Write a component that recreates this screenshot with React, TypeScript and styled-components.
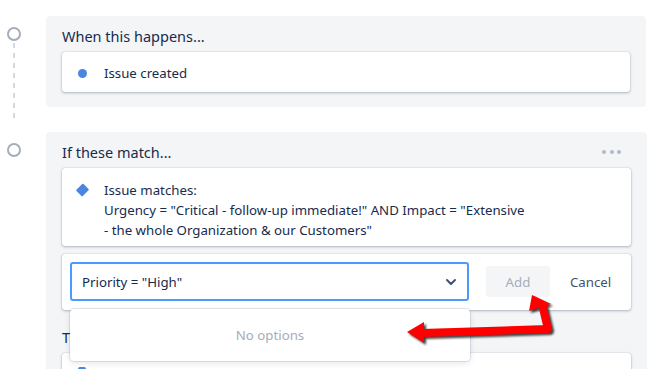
import React from "react";
import styled, { createGlobalStyle } from "styled-components";

const Global = createGlobalStyle`
  html, body { margin: 0; padding: 0; background: #ffffff; overflow: hidden; }
  body { font-family: "Noto Sans", "Liberation Sans", Arial, sans-serif; color: #172b4d; }
  * { box-sizing: border-box; }
`;

const Page = styled.div`
  position: relative;
  width: 654px;
  height: 369px;
  padding-top: 16px;
  overflow: hidden;
`;

const Step = styled.div<{ $last?: boolean }>`
  display: flex;
  width: 646px;
  padding-bottom: ${(p) => (p.$last ? "0" : "25px")};
`;

const Rail = styled.div`
  width: 46px;
  flex: 0 0 46px;
  display: flex;
  flex-direction: column;
  align-items: flex-start;
  padding: 11px 0 0 7px;
`;

const Circle = styled.div`
  width: 14px;
  height: 14px;
  border: 2px solid #a5adba;
  border-radius: 50%;
  background: #fff;
`;

const Connector = styled.div`
  flex: 1;
  width: 2px;
  margin: 2px 0 -12px 6px;
  background: repeating-linear-gradient(
    to bottom,
    #d3d9df 0 5px,
    transparent 5px 10px
  );
`;

const Panel = styled.section<{ $open?: boolean }>`
  flex: 0 0 600px;
  background: #f4f5f7;
  border-radius: 4px;
  padding: 10px 16px ${(p) => (p.$open ? "0" : "15px")};
  display: flex;
  flex-direction: column;
`;

const Header = styled.div`
  display: flex;
  align-items: center;
  justify-content: space-between;
  height: 20px;
  margin-bottom: 6px;
`;

const Title = styled.h2<{ $gapTop?: number }>`
  margin: ${(p) => (p.$gapTop ? `${p.$gapTop}px` : "0")} 0 6px;
  font-size: 14.5px;
  line-height: 20px;
  font-weight: 400;
  color: #172b4d;
`;

const HeaderTitle = styled(Title)`
  margin: 0;
`;

const More = styled.div`
  display: flex;
  gap: 3.5px;
  margin-right: 10px;
  span {
    width: 4px;
    height: 4px;
    border-radius: 50%;
    background: #b3bac5;
  }
`;

const Card = styled.div<{ $pad?: string }>`
  background: #ffffff;
  border-radius: 3px;
  box-shadow: 0 1px 3px rgba(9, 30, 66, 0.28), 0 0 1px rgba(9, 30, 66, 0.31);
  padding: ${(p) => p.$pad || "11px 16px 9px"};
  display: flex;
  align-items: flex-start;
  gap: 17px;
  font-size: 13.25px;
  line-height: 20px;
`;

const IconBox = styled.div`
  width: 9px;
  height: 20px;
  flex: 0 0 9px;
  display: flex;
  align-items: center;
  justify-content: center;
`;

const Dot = styled.span`
  width: 9px;
  height: 9px;
  border-radius: 50%;
  background: #4a86e0;
`;

const Diamond = styled.span`
  width: 10px;
  height: 10px;
  background: #4a86e0;
  transform: rotate(45deg);
  border-radius: 1px;
`;

const ActionIcon = styled.span`
  display: block;
  width: 8px;
  height: 8px;
  border-radius: 2px;
  background: #4a86e0;
`;

const Lines = styled.div`
  display: flex;
  flex-direction: column;
  span { display: block; white-space: nowrap; }
`;

const EditRow = styled.div`
  margin-top: 8px;
  background: #ffffff;
  border-radius: 3px;
  box-shadow: 0 1px 3px rgba(9, 30, 66, 0.28), 0 0 1px rgba(9, 30, 66, 0.31);
  padding: 8px 8px 9px;
  display: flex;
  align-items: center;
`;

const SelectWrap = styled.div`
  position: relative;
  flex: 0 0 399px;
`;

const SelectBox = styled.div`
  height: 39px;
  border: 2px solid #4c9aff;
  border-radius: 3px;
  background: #fff;
  display: flex;
  align-items: center;
  justify-content: space-between;
  padding: 0 9px 0 10px;
  font-size: 13.25px;
  color: #172b4d;
`;

const Menu = styled.div`
  position: absolute;
  left: 0;
  top: calc(100% + 8px);
  width: 400px;
  height: 52px;
  background: #fff;
  border-radius: 4px;
  box-shadow: 0 0 0 1px rgba(9, 30, 66, 0.1), 0 2px 6px rgba(9, 30, 66, 0.12);
  display: flex;
  align-items: center;
  justify-content: center;
  font-size: 13.25px;
  color: #a5adba;
  z-index: 2;
`;

const Button = styled.button<{ $disabled?: boolean }>`
  font-family: inherit;
  font-size: 13.25px;
  height: 31px;
  border: none;
  border-radius: 3px;
  padding: 0 12px;
  background: ${(p) => (p.$disabled ? "#f4f5f7" : "transparent")};
  color: ${(p) => (p.$disabled ? "#a5adba" : "#42526e")};
  cursor: pointer;
`;

const AddButton = styled(Button)`
  width: 64px;
  margin-left: 17px;
`;

const CancelButton = styled(Button)`
  margin-left: 8px;
`;

const Arrow = styled.svg`
  position: absolute;
  left: 400px;
  top: 288px;
  width: 160px;
  height: 60px;
  overflow: visible;
  filter: drop-shadow(2px 2px 1px rgba(0, 0, 0, 0.75));
  z-index: 3;
`;

export default function App() {
  return (
    <>
      <Global />
      <Page>
        <Step>
          <Rail>
            <Circle />
            <Connector />
          </Rail>
          <Panel>
            <Title>When this happens...</Title>
            <Card>
              <IconBox>
                <Dot />
              </IconBox>
              <span>Issue created</span>
            </Card>
          </Panel>
        </Step>

        <Step $last>
          <Rail>
            <Circle />
          </Rail>
          <Panel $open>
            <Header>
              <HeaderTitle>If these match...</HeaderTitle>
              <More>
                <span />
                <span />
                <span />
              </More>
            </Header>
            <Card $pad="12px 16px 6px">
              <IconBox>
                <Diamond />
              </IconBox>
              <Lines>
                <span>Issue matches:</span>
                <span>Urgency = "Critical - follow-up immediate!" AND Impact = "Extensive</span>
                <span>- the whole Organization &amp; our Customers"</span>
              </Lines>
            </Card>
            <EditRow>
              <SelectWrap>
                <SelectBox>
                  <span>Priority = "High"</span>
                  <svg width="14" height="14" viewBox="0 0 14 14">
                    <path d="M3 5l4 4 4-4" fill="none" stroke="#42526e" strokeWidth="2" strokeLinecap="round" strokeLinejoin="round" />
                  </svg>
                </SelectBox>
                <Menu>No options</Menu>
              </SelectWrap>
              <AddButton $disabled>Add</AddButton>
              <CancelButton>Cancel</CancelButton>
            </EditRow>
            <Title $gapTop={17}>Then...</Title>
            <Card $pad="14px 16px 20px">
              <ActionIcon />
            </Card>
          </Panel>
        </Step>

        <Arrow viewBox="0 0 160 60">
          <polyline points="22,45 148,41 143,20" fill="none" stroke="#ff0000" strokeWidth="8" strokeLinejoin="round" strokeLinecap="round" />
          <polygon points="7,44 24,34 24,55" fill="#ff0000" />
          <polygon points="132,7 129,23 151,16" fill="#ff0000" />
        </Arrow>
      </Page>
    </>
  );
}
